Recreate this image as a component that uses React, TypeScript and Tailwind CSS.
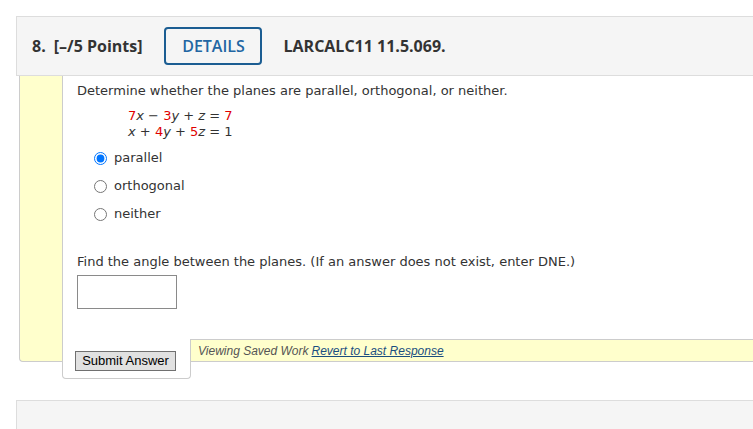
import React from 'react'

const body = { fontFamily: '"DejaVu Sans", Verdana, sans-serif' }
const head = { fontFamily: '"Open Sans", "Noto Sans", sans-serif' }
const arial = { fontFamily: '"Liberation Sans", Arial, sans-serif' }

function Choice({ label, checked }: { label: string; checked?: boolean }) {
    return (
        <label className='flex h-[28px] items-center pl-[17px] text-[13px] text-[#333]'>
            <input type='radio' name='q8' defaultChecked={checked} className='h-[13px] w-[13px]' />
            <span className='ml-[7px]'>{label}</span>
        </label>
    )
}

export default function App() {
    return (
        <div className='h-screen overflow-hidden bg-white pl-4 pt-4'>
            <div className='w-[800px]'>
                {/* header */}
                <div className='flex h-[60px] items-center border border-[#dddddd] bg-[#f5f5f5] pl-[15px] text-[#333]' style={head}>
                    <span className='text-[16px] font-bold'>8.</span>
                    <span className='ml-[8px] text-[16px] font-bold'>[–/5 Points]</span>
                    <div className='ml-[22px] flex h-[38px] w-[98px] items-center justify-center rounded-[4px] border-2 border-[#1b5d92] text-[16px] font-semibold text-[#2266a3]'>
                        DETAILS
                    </div>
                    <span className='ml-[21px] text-[16px] font-bold'>LARCALC11 11.5.069.</span>
                </div>

                <div className='flex items-start pl-[3px]'>
                    <div className='h-[286px] w-[43px] rounded-bl-[4px] border-b border-l border-[#cccccc] bg-[#ffffcc]' />
                    <div className='flex flex-1 flex-col'>
                        <div className='h-[263px] border-l border-[#cccccc] bg-white pl-[14px] pt-[6px]' style={body}>
                            <p className='text-[13px] leading-[18px] text-[#333]'>
                                Determine whether the planes are parallel, orthogonal, or neither.
                            </p>
                            <div className='mt-[8px] pl-[51px] text-[13px] leading-[16px] text-[#333]'>
                                <div>
                                    <span className='text-[#e00000]'>7</span><i>x</i> − <span className='text-[#e00000]'>3</span><i>y</i> + <i>z</i> = <span className='text-[#e00000]'>7</span>
                                </div>
                                <div>
                                    <i>x</i> + <span className='text-[#e00000]'>4</span><i>y</i> + <span className='text-[#e00000]'>5</span><i>z</i> = 1
                                </div>
                            </div>
                            <div className='mt-[4px]'>
                                <Choice label='parallel' checked />
                                <Choice label='orthogonal' />
                                <Choice label='neither' />
                            </div>
                            <p className='mt-[25px] text-[13px] leading-[18px] text-[#333]'>
                                Find the angle between the planes. (If an answer does not exist, enter DNE.)
                            </p>
                            <input type='text' className='mt-[4px] block h-[34px] w-[100px] border border-[#8a8a8a] bg-white' />
                        </div>

                        <div className='flex items-start'>
                            <div className='flex h-[40px] w-[129px] items-start rounded-b-[4px] border-b border-l border-r border-[#cccccc] bg-white pl-[12px] pt-[12px]'>
                                <button className='flex h-[20px] w-[101px] items-center justify-center border border-[#707070] bg-[#e1e1e1] text-[13px] text-black' style={arial}>
                                    Submit Answer
                                </button>
                            </div>
                            <div className='flex h-[23px] flex-1 items-center border-b border-t border-[#cccccc] bg-[#ffffcc] pl-[7px] text-[12px] italic text-[#555]' style={arial}>
                                Viewing Saved Work
                                <a className='ml-[3px] text-[#1a4e80] underline'>Revert to Last Response</a>
                            </div>
                        </div>
                    </div>
                </div>

                <div className='mt-[21px] h-[60px] border border-[#dddddd] bg-[#f5f5f5]' />
            </div>
        </div>
    )
}
